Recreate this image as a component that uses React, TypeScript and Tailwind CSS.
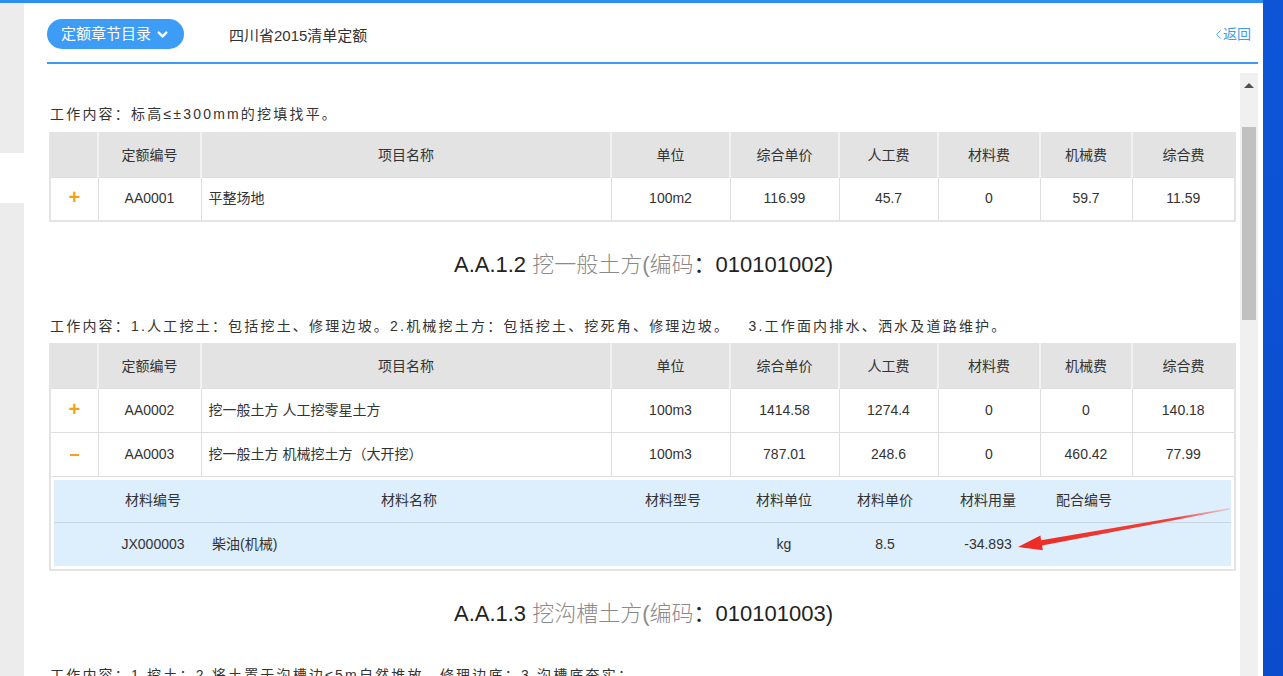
import { ChevronDown, ChevronLeft } from 'lucide-react';

const headers = ['', '定额编号', '项目名称', '单位', '综合单价', '人工费', '材料费', '机械费', '综合费'];
const colW = [48, 103, 410, 119, 109, 99, 102, 92, 103];

type Row = { sign: '+' | '-'; code: string; name: string; unit: string; vals: string[] };

const table1: Row[] = [
    { sign: '+', code: 'AA0001', name: '平整场地', unit: '100m2', vals: ['116.99', '45.7', '0', '59.7', '11.59'] },
];

const table2: Row[] = [
    { sign: '+', code: 'AA0002', name: '挖一般土方 人工挖零星土方', unit: '100m3', vals: ['1414.58', '1274.4', '0', '0', '140.18'] },
    { sign: '-', code: 'AA0003', name: '挖一般土方 机械挖土方（大开挖）', unit: '100m3', vals: ['787.01', '248.6', '0', '460.42', '77.99'] },
];

function Colgroup() {
    return (
        <colgroup>
            {colW.map((w, i) => (
                <col key={i} style={{ width: w }} />
            ))}
        </colgroup>
    );
}

function HeadRow() {
    return (
        <tr className="h-[44px] bg-[#e3e3e3]">
            {headers.map((h, i) => (
                <th key={i} className="border-x-2 border-[#f2f2f2] first:border-l-0 last:border-r-0 font-normal text-[#333] text-center">
                    {h}
                </th>
            ))}
        </tr>
    );
}

function DataRow({ row }: { row: Row }) {
    return (
        <tr className="h-[44px] bg-white">
            <td className="border border-[#dedede] text-center">
                {row.sign === '+' ? (
                    <span className="text-[#f7a11a] text-[20px] font-bold leading-none">+</span>
                ) : (
                    <span className="inline-block w-[9px] h-[2px] bg-[#f7a11a] align-middle"></span>
                )}
            </td>
            <td className="border border-[#dedede] text-center">{row.code}</td>
            <td className="border border-[#dedede] pl-[7px]">{row.name}</td>
            <td className="border border-[#dedede] text-center">{row.unit}</td>
            {row.vals.map((v, i) => (
                <td key={i} className="border border-[#dedede] text-center">{v}</td>
            ))}
        </tr>
    );
}

function Arrow() {
    return (
        <svg className="absolute left-0 top-0 pointer-events-none" width="1180" height="90" viewBox="0 0 1180 90">
            <defs>
                <linearGradient id="arrowFade" x1="964" y1="67" x2="1176" y2="29" gradientUnits="userSpaceOnUse">
                    <stop offset="0" stopColor="#ee2a24" />
                    <stop offset="0.75" stopColor="#f0413b" />
                    <stop offset="1" stopColor="#f6a0a0" stopOpacity="0.6" />
                </linearGradient>
            </defs>
            <polygon
                points="964,67 986.4,55.4 987.1,60.2 1175.6,28.3 1175.9,29.5 988,65.4 988.9,70.2"
                fill="url(#arrowFade)"
            />
        </svg>
    );
}

function WorkContent({ children }: { children: React.ReactNode }) {
    return <p className="pl-[3px] text-[14px] leading-[20px] tracking-[2.2px] text-[#333] whitespace-nowrap">{children}</p>;
}

function SectionTitle({ num, name, code }: { num: string; name: string; code: string }) {
    return (
        <h2 className="text-center text-[22px] leading-[28px] text-[#222] mt-[29px] mb-[37px]">
            {num} <span className="text-[#8a8a8a] font-light">{name}(编码</span>：{code})
        </h2>
    );
}

export default function App() {
    return (
        <div className="flex w-[1283px] h-[676px] overflow-hidden font-['Liberation_Sans','Noto_Sans_CJK_SC',sans-serif] text-[14px] text-[#333] bg-[#0b50d2]">
            <div className="flex flex-col w-[1263px] h-full">
                <div className="h-[3px] bg-[#2a8ff0]"></div>
                <div className="flex flex-1 min-h-0">
                    {/* left side strip */}
                    <div className="w-[24px] flex flex-col bg-[#ececec]">
                        <div className="h-[150px]"></div>
                        <div className="h-[50px] bg-white"></div>
                    </div>

                    <div className="flex-1 flex flex-col bg-white min-w-0">
                        {/* header */}
                        <div className="h-[59px] flex items-center pl-[23px] pr-[12px] pt-[3px]">
                            <button className="h-[30px] w-[137px] rounded-full bg-[#3c9cf6] text-white text-[15px] flex items-center pl-[14px] gap-[4px]">
                                定额章节目录
                                <ChevronDown size={15} strokeWidth={4} />
                            </button>
                            <span className="ml-[45px] mt-[5px] text-[15px] text-[#333]">四川省2015清单定额</span>
                            <a className="ml-auto flex items-center text-[14px] text-[#3a9cf0]">
                                <ChevronLeft size={15} strokeWidth={1.5} className="-mr-[3px]" />
                                返回
                            </a>
                        </div>
                        <div className="h-[2px] bg-[#3d9bf5] ml-[23px] mr-[5px]"></div>

                        {/* scroll area */}
                        <div className="flex flex-1 min-h-0 mt-[9px] pl-[23px] pr-[5px]">
                            <div className="flex-1 overflow-hidden pt-[31px]">
                                <WorkContent>工作内容：标高≤±300mm的挖填找平。</WorkContent>

                                <table className="mt-[8px] ml-[2px] w-[1185px] table-fixed border-collapse border-2 border-[#e4e4e4]">
                                    <Colgroup />
                                    <tbody>
                                        <HeadRow />
                                        {table1.map((r) => (
                                            <DataRow key={r.code} row={r} />
                                        ))}
                                    </tbody>
                                </table>

                                <SectionTitle num="A.A.1.2" name="挖一般土方" code="010101002" />

                                <WorkContent>
                                    工作内容：1.人工挖土：包括挖土、修理边坡。2.机械挖土方：包括挖土、挖死角、修理边坡。&nbsp;&nbsp;&nbsp;3.工作面内排水、洒水及道路维护。
                                </WorkContent>

                                <table className="mt-[7px] ml-[2px] w-[1185px] table-fixed border-collapse border-2 border-[#e4e4e4]">
                                    <Colgroup />
                                    <tbody>
                                        <HeadRow />
                                        {table2.map((r) => (
                                            <DataRow key={r.code} row={r} />
                                        ))}
                                        <tr>
                                            <td colSpan={9} className="border border-[#dedede] p-[3px]">
                                                <div className="relative bg-[#ddeefd]">
                                                    <div className="grid grid-cols-[48px_102px_410px_118px_104px_98px_108px_84px_1fr] h-[43px] items-center text-center border-b border-[#c9d6e2]">
                                                        <span></span>
                                                        <span>材料编号</span>
                                                        <span>材料名称</span>
                                                        <span>材料型号</span>
                                                        <span>材料单位</span>
                                                        <span>材料单价</span>
                                                        <span>材料用量</span>
                                                        <span>配合编号</span>
                                                        <span></span>
                                                    </div>
                                                    <div className="grid grid-cols-[48px_102px_410px_118px_104px_98px_108px_84px_1fr] h-[43px] items-center text-center">
                                                        <span></span>
                                                        <span>JX000003</span>
                                                        <span className="text-left pl-[8px]">柴油(机械)</span>
                                                        <span></span>
                                                        <span>kg</span>
                                                        <span>8.5</span>
                                                        <span>-34.893</span>
                                                        <span></span>
                                                        <span></span>
                                                    </div>
                                                    <Arrow />
                                                </div>
                                            </td>
                                        </tr>
                                    </tbody>
                                </table>

                                <SectionTitle num="A.A.1.3" name="挖沟槽土方" code="010101003" />

                                <WorkContent>工作内容：1.挖土；2.将土置于沟槽边≤5m自然堆放，修理边底；3.沟槽底夯实；</WorkContent>
                            </div>

                            {/* scrollbar */}
                            <div className="w-[18px] bg-[#f0f0f0] flex flex-col items-center">
                                <div className="h-[24px] flex items-center justify-center">
                                    <div className="w-0 h-0 border-l-[5px] border-r-[5px] border-b-[5px] border-l-transparent border-r-transparent border-b-[#505050]"></div>
                                </div>
                                <div className="mt-[30px] w-[14px] h-[193px] bg-[#c1c1c1]"></div>
                            </div>
                        </div>
                    </div>
                </div>
            </div>
            <div className="flex-1 bg-gradient-to-b from-[#0d55d8] to-[#0a4ccc]"></div>
        </div>
    );
}
